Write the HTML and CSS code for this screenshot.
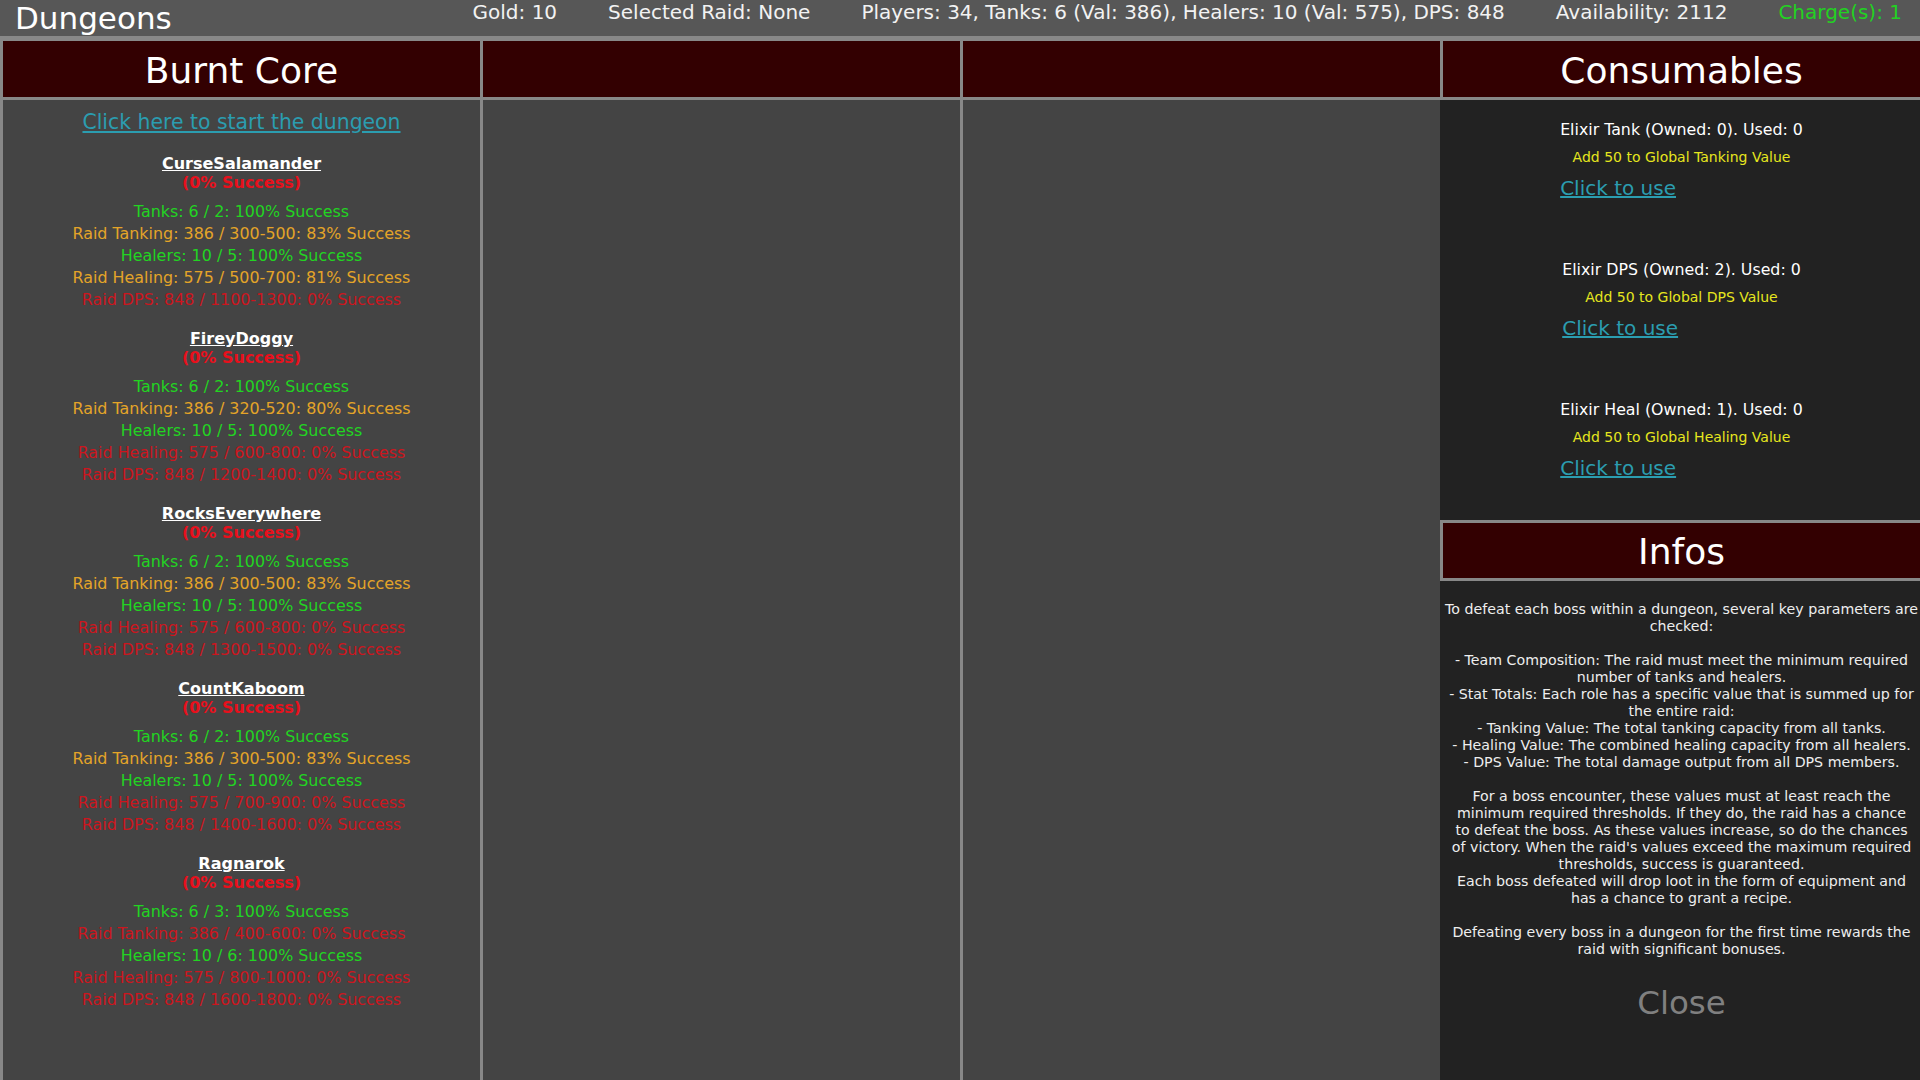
FILE: index.html
```html
<!DOCTYPE html>
<html lang="en">
<head>
<meta charset="utf-8">
<title>Dungeons</title>
<link rel="stylesheet" href="styles.css">
</head>
<body>
<header class="topbar">
  <h1 class="title">Dungeons</h1>
  <div class="stats">
    <span>Gold: 10</span>
    <span>Selected Raid: None</span>
    <span>Players: 34, Tanks: 6 (Val: 386), Healers: 10 (Val: 575), DPS: 848</span>
    <span>Availability: 2112</span>
    <span class="charge">Charge(s): 1</span>
  </div>
</header>
<main class="board">
  <section class="col">
    <div class="col-head">Burnt Core</div>
    <div class="col-body dungeon">
      <a class="start-link" href="#">Click here to start the dungeon</a>

      <div class="boss">
        <div class="boss-name">CurseSalamander</div>
        <div class="boss-chance">(0% Success)</div>
        <ul class="checks">
          <li class="ok">Tanks: 6 / 2: 100% Success</li>
          <li class="mid">Raid Tanking: 386 / 300-500: 83% Success</li>
          <li class="ok">Healers: 10 / 5: 100% Success</li>
          <li class="mid">Raid Healing: 575 / 500-700: 81% Success</li>
          <li class="bad">Raid DPS: 848 / 1100-1300: 0% Success</li>
        </ul>
      </div>

      <div class="boss">
        <div class="boss-name">FireyDoggy</div>
        <div class="boss-chance">(0% Success)</div>
        <ul class="checks">
          <li class="ok">Tanks: 6 / 2: 100% Success</li>
          <li class="mid">Raid Tanking: 386 / 320-520: 80% Success</li>
          <li class="ok">Healers: 10 / 5: 100% Success</li>
          <li class="bad">Raid Healing: 575 / 600-800: 0% Success</li>
          <li class="bad">Raid DPS: 848 / 1200-1400: 0% Success</li>
        </ul>
      </div>

      <div class="boss">
        <div class="boss-name">RocksEverywhere</div>
        <div class="boss-chance">(0% Success)</div>
        <ul class="checks">
          <li class="ok">Tanks: 6 / 2: 100% Success</li>
          <li class="mid">Raid Tanking: 386 / 300-500: 83% Success</li>
          <li class="ok">Healers: 10 / 5: 100% Success</li>
          <li class="bad">Raid Healing: 575 / 600-800: 0% Success</li>
          <li class="bad">Raid DPS: 848 / 1300-1500: 0% Success</li>
        </ul>
      </div>

      <div class="boss">
        <div class="boss-name">CountKaboom</div>
        <div class="boss-chance">(0% Success)</div>
        <ul class="checks">
          <li class="ok">Tanks: 6 / 2: 100% Success</li>
          <li class="mid">Raid Tanking: 386 / 300-500: 83% Success</li>
          <li class="ok">Healers: 10 / 5: 100% Success</li>
          <li class="bad">Raid Healing: 575 / 700-900: 0% Success</li>
          <li class="bad">Raid DPS: 848 / 1400-1600: 0% Success</li>
        </ul>
      </div>

      <div class="boss">
        <div class="boss-name">Ragnarok</div>
        <div class="boss-chance">(0% Success)</div>
        <ul class="checks">
          <li class="ok">Tanks: 6 / 3: 100% Success</li>
          <li class="bad">Raid Tanking: 386 / 400-600: 0% Success</li>
          <li class="ok">Healers: 10 / 6: 100% Success</li>
          <li class="bad">Raid Healing: 575 / 800-1000: 0% Success</li>
          <li class="bad">Raid DPS: 848 / 1600-1800: 0% Success</li>
        </ul>
      </div>
    </div>
  </section>

  <section class="col">
    <div class="col-head"></div>
    <div class="col-body"></div>
  </section>

  <section class="col">
    <div class="col-head"></div>
    <div class="col-body"></div>
  </section>

  <section class="col side">
    <div class="col-head">Consumables</div>
    <div class="consumables">
      <div class="item">
        <p class="item-name">Elixir Tank (Owned: 0). Used: 0</p>
        <p class="item-desc">Add 50 to Global Tanking Value</p>
        <a class="item-use" href="#">Click to use</a>
      </div>
      <div class="item">
        <p class="item-name">Elixir DPS (Owned: 2). Used: 0</p>
        <p class="item-desc">Add 50 to Global DPS Value</p>
        <a class="item-use" href="#">Click to use</a>
      </div>
      <div class="item">
        <p class="item-name">Elixir Heal (Owned: 1). Used: 0</p>
        <p class="item-desc">Add 50 to Global Healing Value</p>
        <a class="item-use" href="#">Click to use</a>
      </div>
    </div>
    <div class="infos-head">Infos</div>
    <div class="infos-body">
      <p class="infos-text">To defeat each boss within a dungeon, several key parameters are<br>checked:<br><br>- Team Composition: The raid must meet the minimum required<br>number of tanks and healers.<br>- Stat Totals: Each role has a specific value that is summed up for<br>the entire raid:<br>- Tanking Value: The total tanking capacity from all tanks.<br>- Healing Value: The combined healing capacity from all healers.<br>- DPS Value: The total damage output from all DPS members.<br><br>For a boss encounter, these values must at least reach the<br>minimum required thresholds. If they do, the raid has a chance<br>to defeat the boss. As these values increase, so do the chances<br>of victory. When the raid's values exceed the maximum required<br>thresholds, success is guaranteed.<br>Each boss defeated will drop loot in the form of equipment and<br>has a chance to grant a recipe.<br><br>Defeating every boss in a dungeon for the first time rewards the<br>raid with significant bonuses.</p>
      <div class="close">Close</div>
    </div>
  </section>
</main>
</body>
</html>
```

FILE: styles.css
```css
* {
  box-sizing: border-box;
}

html, body {
  margin: 0;
  padding: 0;
  height: 100%;
}

body {
  font-family: "DejaVu Sans", "Liberation Sans", sans-serif;
  background: #444444;
  color: #ffffff;
  overflow: hidden;
  display: flex;
  flex-direction: column;
}

.topbar {
  flex: none;
  height: 38px;
  background: #575757;
  border-bottom: 2px solid #888888;
  display: flex;
  justify-content: space-between;
  align-items: flex-start;
  padding: 0 18px 0 15px;
}

.title {
  margin: 0;
  padding-top: 1px;
  font-size: 31px;
  font-weight: normal;
  line-height: 34px;
  color: #ffffff;
}

.stats {
  display: flex;
  gap: 51px;
  font-size: 20px;
  line-height: 24px;
  color: #f2f2f2;
}

.charge {
  color: #22d222;
}

.board {
  flex: 1;
  display: grid;
  grid-template-columns: repeat(4, 480px);
  min-height: 0;
}

.col {
  display: flex;
  flex-direction: column;
  min-height: 0;
}

.col-head,
.infos-head {
  flex: none;
  height: 62px;
  background: #330001;
  border: 3px solid #888888;
  border-right: none;
  font-size: 36px;
  line-height: 60px;
  text-align: center;
  color: #ffffff;
  overflow: hidden;
}

.col-body {
  flex: 1;
  border-left: 3px solid #888888;
  background: #444444;
}

.dungeon {
  padding-top: 11px;
  text-align: center;
}

.start-link {
  display: inline-block;
  margin-bottom: 2px;
  font-size: 20.4px;
  line-height: 23px;
  color: #2b9db0;
  text-decoration: underline;
}

.boss {
  margin-top: 18px;
}

.boss-name {
  font-size: 16px;
  font-weight: bold;
  line-height: 19px;
  text-decoration: underline;
  color: #ffffff;
}

.boss-chance {
  font-size: 16px;
  font-weight: bold;
  line-height: 19px;
  color: #e8101c;
}

.checks {
  list-style: none;
  margin: 9px 0 0;
  padding: 0;
  font-size: 15.9px;
  line-height: 22px;
}

.ok {
  color: #22d422;
}

.mid {
  color: #e4a428;
}

.bad {
  color: #cc161e;
}

.side {
  background: #222222;
}

.consumables {
  flex: none;
  height: 420px;
  padding: 20px 0 40px 3px;
  display: flex;
  flex-direction: column;
  align-items: center;
  gap: 60px;
}

.item {
  display: flex;
  flex-direction: column;
  align-items: stretch;
}

.item-name {
  margin: 0;
  font-size: 15.8px;
  line-height: 19px;
  text-align: center;
  color: #ffffff;
}

.item-desc {
  margin: 10px 0 0;
  font-size: 14px;
  line-height: 17px;
  text-align: center;
  color: #e6e61e;
}

.item-use {
  margin-top: 11px;
  align-self: flex-start;
  font-size: 20px;
  line-height: 23px;
  color: #2b9db0;
  text-decoration: underline;
}

.infos-head {
  height: 61px;
  line-height: 57px;
}

.infos-body {
  flex: 1;
  padding: 20px 0 0 3px;
  text-align: center;
}

.infos-text {
  margin: 0;
  font-size: 14.2px;
  line-height: 17px;
  white-space: nowrap;
  color: #eeeeee;
}

.close {
  margin-top: 27px;
  font-size: 32.5px;
  line-height: 37px;
  color: #808080;
}
```
